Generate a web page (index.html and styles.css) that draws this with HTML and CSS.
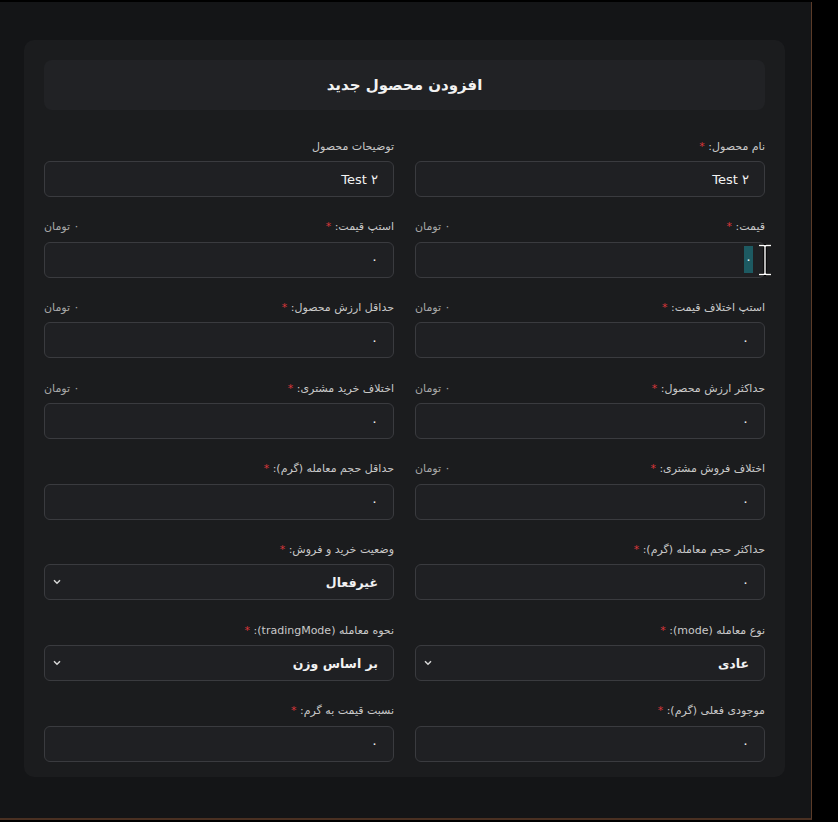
FILE: index.html
```html
<!DOCTYPE html>
<html lang="fa">
<head>
<meta charset="utf-8">
<link rel="stylesheet" href="styles.css">
</head>
<body>
<div class="frame">
  <div class="card" dir="rtl">
    <div class="header">افزودن محصول جدید</div>
    <div class="grid">
      <div class="field">
        <div class="label"><span>نام محصول: <i class="req">*</i></span></div>
        <div class="input">Test ۲</div>
      </div>
      <div class="field">
        <div class="label"><span>توضیحات محصول</span></div>
        <div class="input">Test ۲</div>
      </div>

      <div class="field">
        <div class="label"><span>قیمت: <i class="req">*</i></span><span class="unit">۰ تومان</span></div>
        <div class="input focus"><span class="sel">۰</span>
          <svg class="ibeam" width="14" height="32" viewBox="0 0 14 32"><path d="M1 1.5h4.5q1.5 0 1.5 1.5v26q0 1.5-1.5 1.5H1M13 1.5H8.5Q7 1.5 7 3v26q0 1.5 1.5 1.5H13" fill="none" stroke="#000" stroke-width="3.2"/><path d="M1 1.5h4.5q1.5 0 1.5 1.5v26q0 1.5-1.5 1.5H1M13 1.5H8.5Q7 1.5 7 3v26q0 1.5 1.5 1.5H13" fill="none" stroke="#fff" stroke-width="1.4"/></svg>
        </div>
      </div>
      <div class="field">
        <div class="label"><span>استپ قیمت: <i class="req">*</i></span><span class="unit">۰ تومان</span></div>
        <div class="input">۰</div>
      </div>

      <div class="field">
        <div class="label"><span>استپ اختلاف قیمت: <i class="req">*</i></span><span class="unit">۰ تومان</span></div>
        <div class="input">۰</div>
      </div>
      <div class="field">
        <div class="label"><span>حداقل ارزش محصول: <i class="req">*</i></span><span class="unit">۰ تومان</span></div>
        <div class="input">۰</div>
      </div>

      <div class="field">
        <div class="label"><span>حداکثر ارزش محصول: <i class="req">*</i></span><span class="unit">۰ تومان</span></div>
        <div class="input">۰</div>
      </div>
      <div class="field">
        <div class="label"><span>اختلاف خرید مشتری: <i class="req">*</i></span><span class="unit">۰ تومان</span></div>
        <div class="input">۰</div>
      </div>

      <div class="field">
        <div class="label"><span>اختلاف فروش مشتری: <i class="req">*</i></span><span class="unit">۰ تومان</span></div>
        <div class="input">۰</div>
      </div>
      <div class="field">
        <div class="label"><span>حداقل حجم معامله (گرم): <i class="req">*</i></span></div>
        <div class="input">۰</div>
      </div>

      <div class="field">
        <div class="label"><span>حداکثر حجم معامله (گرم): <i class="req">*</i></span></div>
        <div class="input">۰</div>
      </div>
      <div class="field">
        <div class="label"><span>وضعیت خرید و فروش: <i class="req">*</i></span></div>
        <div class="input select"><span>غیرفعال</span><svg class="chev" width="8" height="6" viewBox="0 0 8 6"><path d="M1 1.2l3 3 3-3" fill="none" stroke="#d8d8d8" stroke-width="1.5"/></svg></div>
      </div>

      <div class="field">
        <div class="label"><span>نوع معامله (mode): <i class="req">*</i></span></div>
        <div class="input select"><span>عادی</span><svg class="chev" width="8" height="6" viewBox="0 0 8 6"><path d="M1 1.2l3 3 3-3" fill="none" stroke="#d8d8d8" stroke-width="1.5"/></svg></div>
      </div>
      <div class="field">
        <div class="label"><span>نحوه معامله (tradingMode): <i class="req">*</i></span></div>
        <div class="input select"><span>بر اساس وزن</span><svg class="chev" width="8" height="6" viewBox="0 0 8 6"><path d="M1 1.2l3 3 3-3" fill="none" stroke="#d8d8d8" stroke-width="1.5"/></svg></div>
      </div>

      <div class="field">
        <div class="label"><span>موجودی فعلی (گرم): <i class="req">*</i></span></div>
        <div class="input">۰</div>
      </div>
      <div class="field">
        <div class="label"><span>نسبت قیمت به گرم: <i class="req">*</i></span></div>
        <div class="input">۰</div>
      </div>
    </div>
  </div>
</div>
</body>
</html>
```

FILE: styles.css
```css
html, body {
  margin: 0;
  padding: 0;
  background: #000;
}
body {
  width: 838px;
  height: 822px;
  overflow: hidden;
  direction: ltr;
  font-family: "DejaVu Sans", "Noto Sans", sans-serif;
  color: #e6e6e6;
}
.frame {
  margin-top: 2px;
  width: 812px;
  height: 818px;
  background: #141517;
  border-right: 1px solid #5b3b28;
  border-bottom: 2px solid #4a3022;
  box-sizing: border-box;
  padding: 38px 0 0 24px;
}
.card {
  direction: rtl;
  width: 761px;
  box-sizing: border-box;
  background: #1b1c1e;
  border-radius: 10px;
  padding: 20px 20px 15px 20px;
}
.header {
  height: 50px;
  background: #212225;
  border-radius: 8px;
  display: flex;
  align-items: center;
  justify-content: center;
  font-size: 15px;
  font-weight: bold;
  color: #f2f2f2;
  margin-bottom: 27px;
}
.grid {
  display: grid;
  grid-template-columns: 350px 350px;
  column-gap: 21px;
  row-gap: 20.7px;
}
.label {
  height: 18px;
  margin-bottom: 6px;
  display: flex;
  justify-content: space-between;
  align-items: center;
  font-size: 11px;
  color: #c9c9c9;
}
.req {
  font-style: normal;
  color: #d9363a;
}
.unit {
  color: #a8a8a8;
}
.input {
  position: relative;
  height: 36px;
  box-sizing: border-box;
  border: 1px solid #3a3b3f;
  border-radius: 6px;
  background: #1f2023;
  display: flex;
  align-items: center;
  padding: 0 15px;
  font-size: 13px;
  color: #f2f2f2;
}
.select {
  justify-content: space-between;
  padding-left: 8px;
  font-weight: bold;
  font-size: 12.5px;
}
.chev {
  display: block;
}
.sel {
  background: #1d5a62;
  padding: 6px 1px;
  color: #e8f4f4;
  margin-right: -4px;
}
.ibeam {
  position: absolute;
  right: -8px;
  top: 1px;
}
```
